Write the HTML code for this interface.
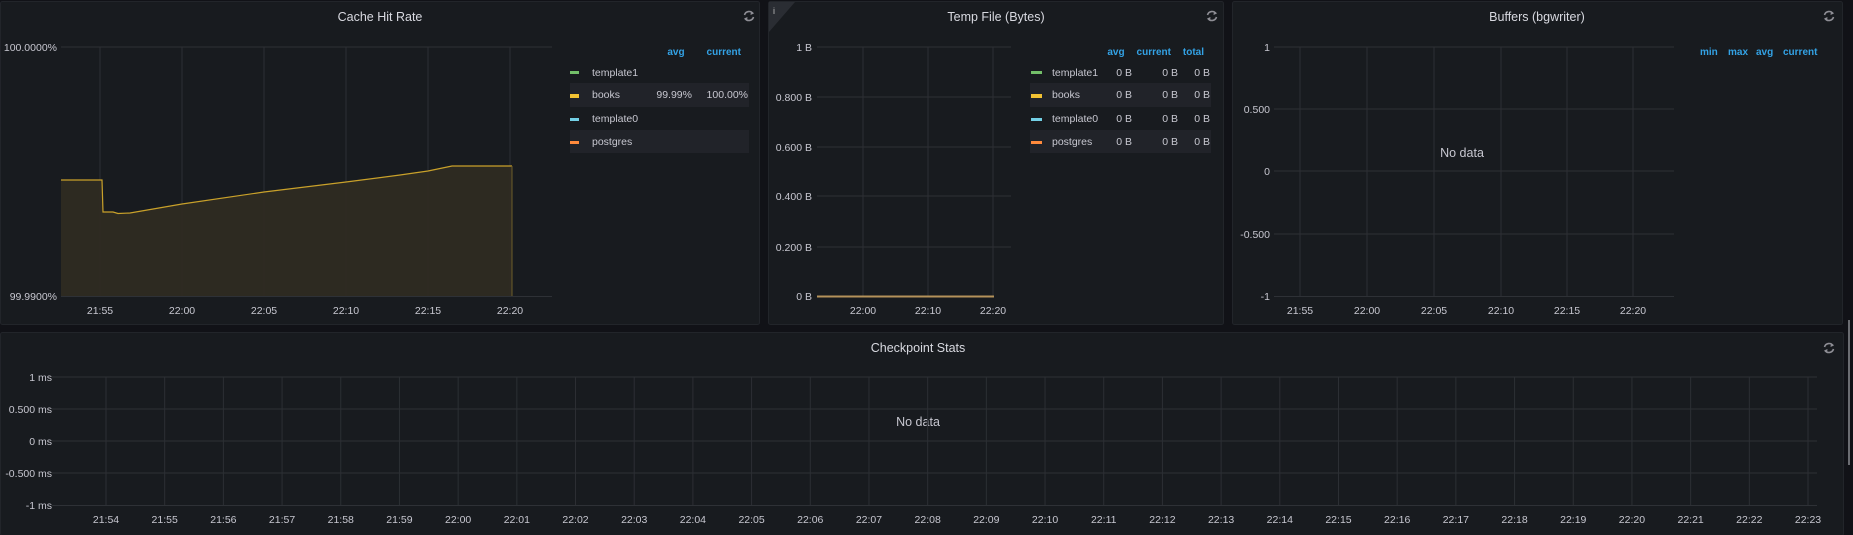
<!DOCTYPE html>
<html><head><meta charset="utf-8"><style>
html,body{margin:0;padding:0;background:#111217;width:1853px;height:535px;overflow:hidden}
svg{display:block}
text{font-family:"Liberation Sans",sans-serif;font-size:10.5px;fill:#c7c7d0}
.t{font-size:12.5px;fill:#d8d9e0;text-anchor:middle}
.yl{text-anchor:end}
.xl{text-anchor:middle}
.h{fill:#33a2e5;font-weight:bold;font-size:10px}
.g{stroke:#2e3136;stroke-width:1}
.v{stroke:#2c2f34;stroke-width:1}
</style></head><body>
<svg width="1853" height="535" viewBox="0 0 1853 535">
<defs>
<g id="rf"><path d="M-4.5,-1 A4.8,4.8 0 0 1 4,-2.5 M4.5,1 A4.8,4.8 0 0 1 -4,2.5" fill="none" stroke="#8e8e95" stroke-width="1.6"/><path d="M2,-5 L5,-2.5 L1.5,-1 Z M-2,5 L-5,2.5 L-1.5,1 Z" fill="#8e8e95"/></g>
</defs>
<rect x="0.5" y="1.5" width="759" height="323" rx="2" fill="#181b1f" stroke="#22252a"/>
<rect x="768.5" y="1.5" width="455" height="323" rx="2" fill="#181b1f" stroke="#22252a"/>
<rect x="1232.5" y="1.5" width="610" height="323" rx="2" fill="#181b1f" stroke="#22252a"/>
<rect x="0.5" y="332.5" width="1843" height="203" rx="2" fill="#181b1f" stroke="#22252a"/>
<rect x="1848" y="320" width="2" height="145" fill="#6b6d72"/>

<text class="t" x="380" y="21">Cache Hit Rate</text>
<use href="#rf" x="749" y="16"/>
<line class="g" x1="61" y1="47" x2="552" y2="47"/>
<line class="g" x1="61" y1="296.5" x2="552" y2="296.5"/>
<g class="v"><line x1="100" y1="47" x2="100" y2="296"/><line x1="182" y1="47" x2="182" y2="296"/><line x1="264" y1="47" x2="264" y2="296"/><line x1="346" y1="47" x2="346" y2="296"/><line x1="428" y1="47" x2="428" y2="296"/><line x1="510" y1="47" x2="510" y2="296"/></g>
<path d="M61,180 L102,180 L103,212 L113,212 L118,213.5 L130,213 L182,204 L264,192 L346,182 L400,175 L428,171 L452,166 L512,166 L512,296 L61,296 Z" fill="#2e2b22" opacity="0.95"/>
<path d="M61,180 L102,180 L103,212 L113,212 L118,213.5 L130,213 L182,204 L264,192 L346,182 L400,175 L428,171 L452,166 L512,166" fill="none" stroke="#c9a12a" stroke-width="1.2"/>
<line x1="512" y1="166" x2="512" y2="296" stroke="#6d5e2a"/>
<text class="yl" x="57" y="51">100.0000%</text>
<text class="yl" x="57" y="300">99.9900%</text>
<g class="xl"><text x="100" y="314">21:55</text><text x="182" y="314">22:00</text><text x="264" y="314">22:05</text><text x="346" y="314">22:10</text><text x="428" y="314">22:15</text><text x="510" y="314">22:20</text></g>
<text class="h" x="676" y="55" text-anchor="middle">avg</text>
<text class="h" x="741" y="55" text-anchor="end">current</text>
<rect x="570" y="83" width="179" height="24" fill="#212329"/>
<rect x="570" y="130" width="179" height="23" fill="#212329"/>
<rect x="570" y="71" width="9" height="3" fill="#73bf69"/><text x="592" y="76">template1</text>
<rect x="570" y="94" width="9" height="4" fill="#f2c233"/><text x="592" y="98">books</text><text class="yl" x="692" y="98">99.99%</text><text class="yl" x="748" y="98">100.00%</text>
<rect x="570" y="118" width="9" height="3" fill="#73d0e5"/><text x="592" y="122">template0</text>
<rect x="570" y="141" width="9" height="3" fill="#ff8a3c"/><text x="592" y="145">postgres</text>

<path d="M769,2 L795,2 L769,32 Z" fill="#2a2d33"/>
<text x="773" y="14" style="font-size:9px;fill:#bbb">i</text>
<text class="t" x="996" y="21">Temp File (Bytes)</text>
<use href="#rf" x="1212" y="16"/>
<g class="g"><line x1="817" y1="47" x2="1011" y2="47"/><line x1="817" y1="97" x2="1011" y2="97"/><line x1="817" y1="147" x2="1011" y2="147"/><line x1="817" y1="196" x2="1011" y2="196"/><line x1="817" y1="247" x2="1011" y2="247"/></g>
<g class="v"><line x1="863" y1="47" x2="863" y2="296"/><line x1="928" y1="47" x2="928" y2="296"/><line x1="993" y1="47" x2="993" y2="296"/></g>
<line x1="817" y1="296.5" x2="994" y2="296.5" stroke="#b4925a" stroke-width="2"/>
<g class="yl"><text x="812" y="51">1 B</text><text x="812" y="101">0.800 B</text><text x="812" y="151">0.600 B</text><text x="812" y="200">0.400 B</text><text x="812" y="251">0.200 B</text><text x="812" y="300">0 B</text></g>
<g class="xl"><text x="863" y="314">22:00</text><text x="928" y="314">22:10</text><text x="993" y="314">22:20</text></g>
<text class="h" x="1116" y="55" text-anchor="middle">avg</text>
<text class="h" x="1171" y="55" text-anchor="end">current</text>
<text class="h" x="1204" y="55" text-anchor="end">total</text>
<rect x="1030" y="83" width="181" height="24" fill="#212329"/>
<rect x="1030" y="130" width="181" height="23" fill="#212329"/>
<rect x="1031" y="71" width="11" height="3" fill="#73bf69"/><text x="1052" y="76">template1</text>
<rect x="1031" y="94" width="11" height="4" fill="#f2c233"/><text x="1052" y="98">books</text>
<rect x="1031" y="118" width="11" height="3" fill="#73d0e5"/><text x="1052" y="122">template0</text>
<rect x="1031" y="141" width="11" height="3" fill="#ff8a3c"/><text x="1052" y="145">postgres</text>
<g class="yl"><text x="1132" y="76">0 B</text><text x="1178" y="76">0 B</text><text x="1210" y="76">0 B</text>
<text x="1132" y="98">0 B</text><text x="1178" y="98">0 B</text><text x="1210" y="98">0 B</text>
<text x="1132" y="122">0 B</text><text x="1178" y="122">0 B</text><text x="1210" y="122">0 B</text>
<text x="1132" y="145">0 B</text><text x="1178" y="145">0 B</text><text x="1210" y="145">0 B</text></g>

<text class="t" x="1537" y="21">Buffers (bgwriter)</text>
<use href="#rf" x="1829" y="16"/>
<g class="g"><line x1="1274" y1="47" x2="1674" y2="47"/><line x1="1274" y1="109" x2="1674" y2="109"/><line x1="1274" y1="171" x2="1674" y2="171"/><line x1="1274" y1="234" x2="1674" y2="234"/><line x1="1274" y1="296.5" x2="1674" y2="296.5"/></g>
<g class="v"><line x1="1300" y1="47" x2="1300" y2="296"/><line x1="1367" y1="47" x2="1367" y2="296"/><line x1="1434" y1="47" x2="1434" y2="296"/><line x1="1501" y1="47" x2="1501" y2="296"/><line x1="1567" y1="47" x2="1567" y2="296"/><line x1="1633" y1="47" x2="1633" y2="296"/></g>
<g class="yl"><text x="1270" y="51">1</text><text x="1270" y="113">0.500</text><text x="1270" y="175">0</text><text x="1270" y="238">-0.500</text><text x="1270" y="300">-1</text></g>
<g class="xl"><text x="1300" y="314">21:55</text><text x="1367" y="314">22:00</text><text x="1434" y="314">22:05</text><text x="1501" y="314">22:10</text><text x="1567" y="314">22:15</text><text x="1633" y="314">22:20</text></g>
<text x="1462" y="157" text-anchor="middle" style="font-size:12.5px">No data</text>
<text class="h" x="1700" y="55">min</text><text class="h" x="1728" y="55">max</text><text class="h" x="1756" y="55">avg</text><text class="h" x="1783" y="55">current</text>

<text class="t" x="918" y="352">Checkpoint Stats</text>
<use href="#rf" x="1829" y="348"/>
<g class="g"><line x1="52" y1="377" x2="1817" y2="377"/><line x1="52" y1="409" x2="1817" y2="409"/><line x1="52" y1="441" x2="1817" y2="441"/><line x1="52" y1="473" x2="1817" y2="473"/><line x1="52" y1="505.5" x2="1817" y2="505.5"/></g>
<g class="yl"><text x="52" y="381">1 ms</text><text x="52" y="413">0.500 ms</text><text x="52" y="445">0 ms</text><text x="52" y="477">-0.500 ms</text><text x="52" y="509">-1 ms</text></g>
<text x="918" y="426" text-anchor="middle" style="font-size:12.5px">No data</text>
<g class="v" id="vb"></g>
<g class="xl" id="xb"></g>
</svg>
<script>
var ns="http://www.w3.org/2000/svg",vb=document.getElementById("vb"),xb=document.getElementById("xb");
for(var i=0;i<30;i++){var x=106+i*58.69;var l=document.createElementNS(ns,"line");l.setAttribute("x1",x);l.setAttribute("x2",x);l.setAttribute("y1",377);l.setAttribute("y2",505);vb.appendChild(l);
var m=54+i,h=21;if(m>=60){m-=60;h=22;}var t=document.createElementNS(ns,"text");t.setAttribute("x",x);t.setAttribute("y",523);t.textContent=h+":"+(m<10?"0"+m:m);xb.appendChild(t);}
</script>
</body></html>
